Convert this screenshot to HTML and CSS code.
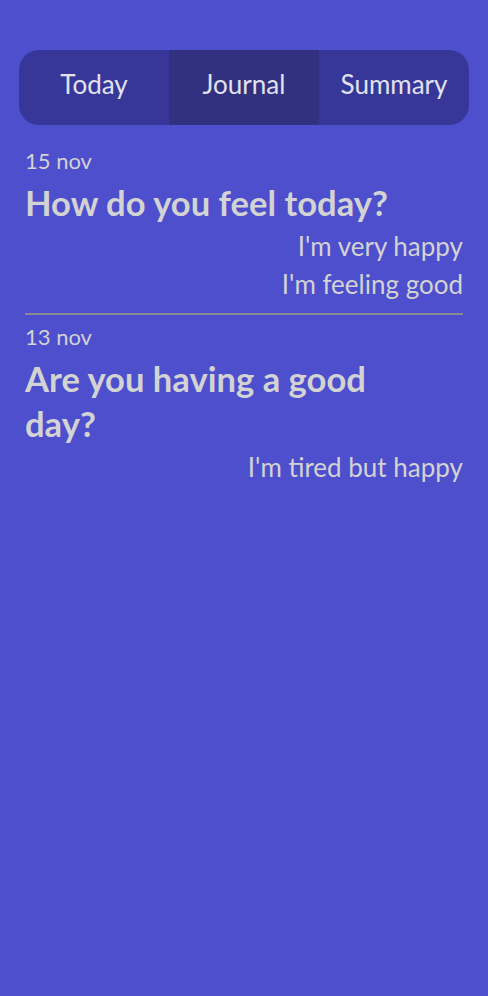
FILE: index.html
```html
<!DOCTYPE html>
<html>
<head>
<meta charset="utf-8">
<link rel="stylesheet" href="styles.css">
</head>
<body>
<div class="app">
  <nav class="tabs">
    <div class="tab">Today</div>
    <div class="tab active">Journal</div>
    <div class="tab">Summary</div>
  </nav>
  <main class="journal">
    <section class="entry">
      <div class="date">15 nov</div>
      <h2 class="question">How do you feel today?</h2>
      <div class="answers">
        <p class="answer">I'm very happy</p>
        <p class="answer">I'm feeling good</p>
      </div>
    </section>
    <section class="entry">
      <div class="date">13 nov</div>
      <h2 class="question">Are you having a good day?</h2>
      <div class="answers">
        <p class="answer">I'm tired but happy</p>
      </div>
    </section>
  </main>
</div>
</body>
</html>
```
FILE: styles.css
```css
* { box-sizing: border-box; }
html, body {
  margin: 0;
  padding: 0;
  background: #4e4fcc;
  font-family: Lato, "Open Sans", sans-serif;
  height: 100%;
}
.app {
  padding: 50px 19px 0 19px;
}
.tabs {
  display: grid;
  grid-template-columns: repeat(3, 1fr);
  height: 75px;
  border-radius: 20px;
  overflow: hidden;
  background: #37379a;
}
.tab {
  display: flex;
  align-items: center;
  justify-content: center;
  padding-bottom: 7px;
  color: #e2e2ec;
  font-size: 26px;
}
.tab.active {
  background: #31317f;
}
.journal {
  padding: 22px 6px 0 6px;
}
.entry {
  color: #d3d3d3;
}
.entry + .entry {
  border-top: 2px solid #8a8a96;
  margin-top: 10px;
  padding-top: 8px;
}
.date {
  font-size: 22px;
  line-height: 28px;
}
.question {
  margin: 5px 0 0 0;
  font-size: 34.6px;
  font-weight: 700;
  line-height: 45px;
  padding-right: 20px;
}
.answers {
  margin-top: 2px;
  text-align: right;
}
.answer {
  margin: 0;
  font-size: 26px;
  line-height: 38px;
}
```
